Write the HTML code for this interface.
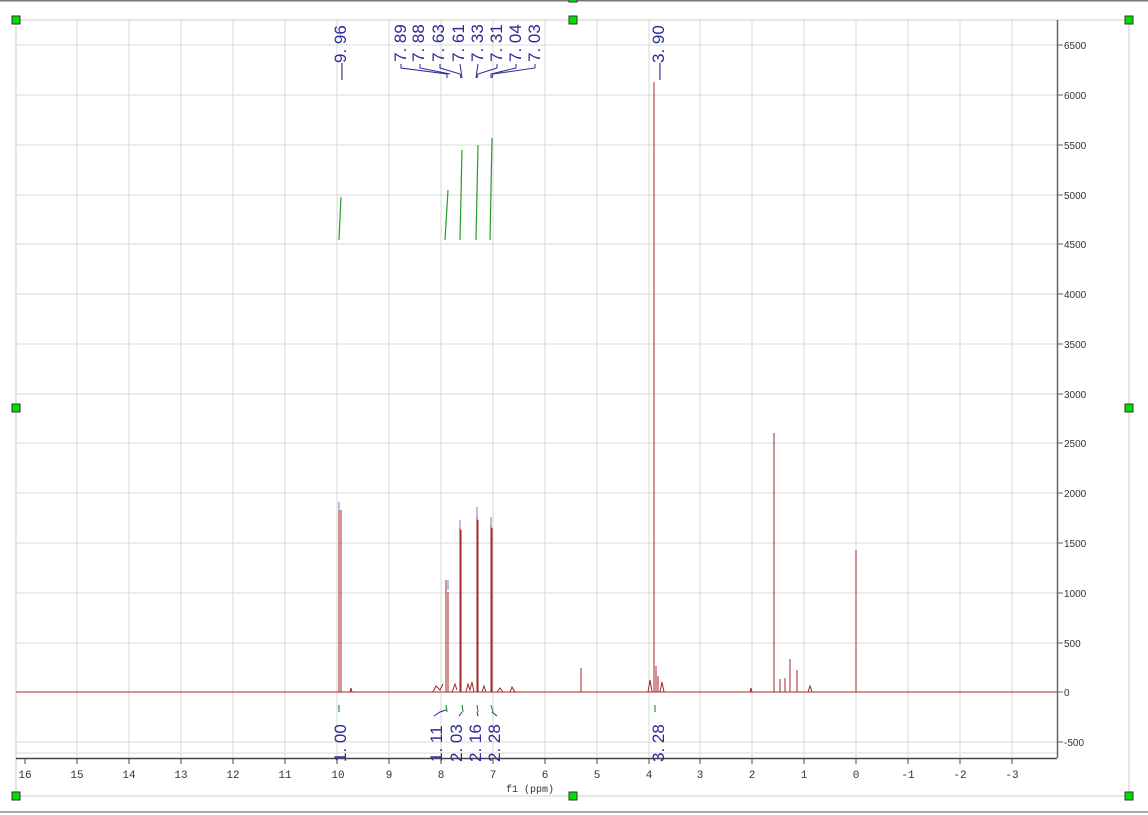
<!DOCTYPE html>
<html><head><meta charset="utf-8"><style>
html,body{margin:0;padding:0;background:#fff;}
svg{display:block}
</style></head><body>
<svg width="1148" height="815" xmlns="http://www.w3.org/2000/svg" font-family="Liberation Sans, sans-serif">
<rect x="0" y="0" width="1148" height="815" fill="#fff"/>
<line x1="0" y1="0.5" x2="1148" y2="0.5" stroke="#777" stroke-width="2"/>
<line x1="0" y1="812" x2="1148" y2="812" stroke="#aaa" stroke-width="2"/>
<rect x="16" y="20" width="1113" height="776" fill="none" stroke="#ccc" stroke-width="1"/>
<g stroke="#d8d8d8" stroke-width="1">
<line x1="77" y1="20" x2="77" y2="758"/><line x1="129" y1="20" x2="129" y2="758"/><line x1="181" y1="20" x2="181" y2="758"/><line x1="233" y1="20" x2="233" y2="758"/><line x1="285" y1="20" x2="285" y2="758"/><line x1="337" y1="20" x2="337" y2="758"/><line x1="389" y1="20" x2="389" y2="758"/><line x1="441" y1="20" x2="441" y2="758"/><line x1="493" y1="20" x2="493" y2="758"/><line x1="545" y1="20" x2="545" y2="758"/><line x1="597" y1="20" x2="597" y2="758"/><line x1="649" y1="20" x2="649" y2="758"/><line x1="700" y1="20" x2="700" y2="758"/><line x1="752" y1="20" x2="752" y2="758"/><line x1="804" y1="20" x2="804" y2="758"/><line x1="856" y1="20" x2="856" y2="758"/><line x1="908" y1="20" x2="908" y2="758"/><line x1="960" y1="20" x2="960" y2="758"/><line x1="1012" y1="20" x2="1012" y2="758"/>
<line x1="16" y1="45" x2="1057" y2="45"/><line x1="16" y1="95" x2="1057" y2="95"/><line x1="16" y1="145" x2="1057" y2="145"/><line x1="16" y1="195" x2="1057" y2="195"/><line x1="16" y1="244" x2="1057" y2="244"/><line x1="16" y1="294" x2="1057" y2="294"/><line x1="16" y1="344" x2="1057" y2="344"/><line x1="16" y1="394" x2="1057" y2="394"/><line x1="16" y1="443" x2="1057" y2="443"/><line x1="16" y1="493" x2="1057" y2="493"/><line x1="16" y1="543" x2="1057" y2="543"/><line x1="16" y1="593" x2="1057" y2="593"/><line x1="16" y1="643" x2="1057" y2="643"/><line x1="16" y1="742" x2="1057" y2="742"/><line x1="16" y1="753" x2="1057" y2="753"/>
</g>
<line x1="1057.5" y1="20" x2="1057.5" y2="758" stroke="#666" stroke-width="1.5"/>
<g stroke="#666"><line x1="1057" y1="45" x2="1063" y2="45"/><line x1="1057" y1="95" x2="1063" y2="95"/><line x1="1057" y1="145" x2="1063" y2="145"/><line x1="1057" y1="195" x2="1063" y2="195"/><line x1="1057" y1="244" x2="1063" y2="244"/><line x1="1057" y1="294" x2="1063" y2="294"/><line x1="1057" y1="344" x2="1063" y2="344"/><line x1="1057" y1="394" x2="1063" y2="394"/><line x1="1057" y1="443" x2="1063" y2="443"/><line x1="1057" y1="493" x2="1063" y2="493"/><line x1="1057" y1="543" x2="1063" y2="543"/><line x1="1057" y1="593" x2="1063" y2="593"/><line x1="1057" y1="643" x2="1063" y2="643"/><line x1="1057" y1="692" x2="1063" y2="692"/><line x1="1057" y1="742" x2="1063" y2="742"/></g>
<g font-size="10" fill="#333">
<text x="1064" y="49">6500</text><text x="1064" y="99">6000</text><text x="1064" y="149">5500</text><text x="1064" y="199">5000</text><text x="1064" y="248">4500</text><text x="1064" y="298">4000</text><text x="1064" y="348">3500</text><text x="1064" y="398">3000</text><text x="1064" y="447">2500</text><text x="1064" y="497">2000</text><text x="1064" y="547">1500</text><text x="1064" y="597">1000</text><text x="1064" y="647">500</text><text x="1064" y="696">0</text><text x="1064" y="746">-500</text>
</g>
<line x1="16" y1="758.5" x2="1057" y2="758.5" stroke="#444" stroke-width="1.5"/>
<g stroke="#444"><line x1="25" y1="758" x2="25" y2="764"/><line x1="77" y1="758" x2="77" y2="764"/><line x1="129" y1="758" x2="129" y2="764"/><line x1="181" y1="758" x2="181" y2="764"/><line x1="233" y1="758" x2="233" y2="764"/><line x1="285" y1="758" x2="285" y2="764"/><line x1="337" y1="758" x2="337" y2="764"/><line x1="389" y1="758" x2="389" y2="764"/><line x1="441" y1="758" x2="441" y2="764"/><line x1="493" y1="758" x2="493" y2="764"/><line x1="545" y1="758" x2="545" y2="764"/><line x1="597" y1="758" x2="597" y2="764"/><line x1="649" y1="758" x2="649" y2="764"/><line x1="700" y1="758" x2="700" y2="764"/><line x1="752" y1="758" x2="752" y2="764"/><line x1="804" y1="758" x2="804" y2="764"/><line x1="856" y1="758" x2="856" y2="764"/><line x1="908" y1="758" x2="908" y2="764"/><line x1="960" y1="758" x2="960" y2="764"/><line x1="1012" y1="758" x2="1012" y2="764"/></g>
<g font-size="11" fill="#333" font-family="Liberation Mono, monospace" text-anchor="middle">
<text x="25" y="778">16</text><text x="77" y="778">15</text><text x="129" y="778">14</text><text x="181" y="778">13</text><text x="233" y="778">12</text><text x="285" y="778">11</text><text x="338" y="778">10</text><text x="389" y="778">9</text><text x="441" y="778">8</text><text x="493" y="778">7</text><text x="545" y="778">6</text><text x="597" y="778">5</text><text x="649" y="778">4</text><text x="700" y="778">3</text><text x="752" y="778">2</text><text x="804" y="778">1</text><text x="856" y="778">0</text><text x="908" y="778">-1</text><text x="960" y="778">-2</text><text x="1012" y="778">-3</text>
<text x="530" y="792" font-size="10">f1 (ppm)</text>
</g>
<g stroke="#a0282a" stroke-width="1" fill="none">
<line x1="16" y1="692" x2="1057" y2="692"/>
<line x1="339" y1="692" x2="339" y2="502"/><line x1="341" y1="692" x2="341" y2="510"/>
<line x1="446" y1="692" x2="446" y2="580"/><line x1="448" y1="692" x2="448" y2="592"/>
<line x1="460" y1="692" x2="460" y2="520"/><line x1="461" y1="692" x2="461" y2="530"/>
<line x1="477" y1="692" x2="477" y2="507"/><line x1="478" y1="692" x2="478" y2="520"/>
<line x1="491" y1="692" x2="491" y2="517"/><line x1="492" y1="692" x2="492" y2="528"/>
<line x1="581" y1="692" x2="581" y2="668"/>
<line x1="654" y1="692" x2="654" y2="82"/><line x1="656" y1="692" x2="656" y2="666"/><line x1="658" y1="692" x2="658" y2="676"/>
<line x1="774" y1="692" x2="774" y2="433"/>
<line x1="780" y1="692" x2="780" y2="679"/><line x1="785" y1="692" x2="785" y2="678"/><line x1="790" y1="692" x2="790" y2="659"/><line x1="797" y1="692" x2="797" y2="670"/>
<line x1="856" y1="692" x2="856" y2="550"/>
<path d="M350 692 L351 688 L352 692 M433 692 L436 686 L440 690 L443 684 M452 692 L455 684 L457 690 M466 692 L468 684 L470 690 L472 682 L474 692 M482 692 L484 686 L486 692 M497 692 L500 688 L503 692 M510 692 L512 687 L515 692 M648 692 L650 680 L652 692 M660 692 L662 682 L664 692 M750 692 L751 688 L752 692 M808 692 L810 686 L812 692"/>
</g>
<g stroke="#7a7ad0" stroke-width="1"><line x1="339" y1="502" x2="339" y2="510"/><line x1="448" y1="580" x2="448" y2="590"/><line x1="477" y1="507" x2="477" y2="517"/><line x1="491" y1="517" x2="491" y2="526"/><line x1="460" y1="520" x2="460" y2="528"/></g>
<g stroke="#2a9a2a" stroke-width="1.2" fill="none">
<path d="M339 240 L341 197"/><path d="M445 240 L448 190"/><path d="M460 240 L462 150"/><path d="M476 240 L478 145"/><path d="M490 240 L492 138"/>
<path d="M339 705 L339 712"/><path d="M446 705 L447 712"/><path d="M462 705 L463 712"/><path d="M477 705 L478 712"/><path d="M491 705 L493 712"/><path d="M655 705 L655 712"/>
</g>
<g font-size="17" fill="#2a2a9a">
<text transform="translate(346,80) rotate(-90)">—9. 96</text>
<text transform="translate(664,80) rotate(-90)">—3. 90</text>
<text transform="translate(406,62) rotate(-90)">7. 89</text>
<text transform="translate(424,62) rotate(-90)">7. 88</text>
<text transform="translate(444,62) rotate(-90)">7. 63</text>
<text transform="translate(464,62) rotate(-90)">7. 61</text>
<text transform="translate(483,62) rotate(-90)">7. 33</text>
<text transform="translate(502,62) rotate(-90)">7. 31</text>
<text transform="translate(521,62) rotate(-90)">7. 04</text>
<text transform="translate(540,62) rotate(-90)">7. 03</text>
<text transform="translate(346,762) rotate(-90)">1. 00</text>
<text transform="translate(442,762) rotate(-90)">1. 11</text>
<text transform="translate(462,762) rotate(-90)">2. 03</text>
<text transform="translate(481,762) rotate(-90)">2. 16</text>
<text transform="translate(500,762) rotate(-90)">2. 28</text>
<text transform="translate(664,762) rotate(-90)">3. 28</text>
</g>
<g stroke="#2a2a9a" stroke-width="1" fill="none">
<path d="M401 64 L401 68 L447 74 L447 78"/><path d="M420 64 L420 68 L450 74"/><path d="M440 64 L440 68 L460 74 L461 78"/><path d="M460 64 L462 78"/>
<path d="M478 64 L476 78"/><path d="M497 64 L497 68 L478 74 L477 78"/><path d="M516 64 L516 68 L491 74 L491 78"/><path d="M535 64 L535 68 L493 74 L492 78"/>
<path d="M434 716 L440 712 L446 710"/><path d="M459 716 L462 712"/><path d="M478 716 L477 712"/><path d="M497 716 L492 712"/>
</g>
<g fill="#00e000" stroke="#333" stroke-width="1">
<rect x="12" y="16" width="8" height="8"/><rect x="569" y="16" width="8" height="8"/><rect x="1125" y="16" width="8" height="8"/>
<rect x="12" y="404" width="8" height="8"/><rect x="1125" y="404" width="8" height="8"/>
<rect x="12" y="792" width="8" height="8"/><rect x="569" y="792" width="8" height="8"/><rect x="1125" y="792" width="8" height="8"/>
<rect x="569" y="-4" width="8" height="6"/>
</g>
</svg>
</body></html>
